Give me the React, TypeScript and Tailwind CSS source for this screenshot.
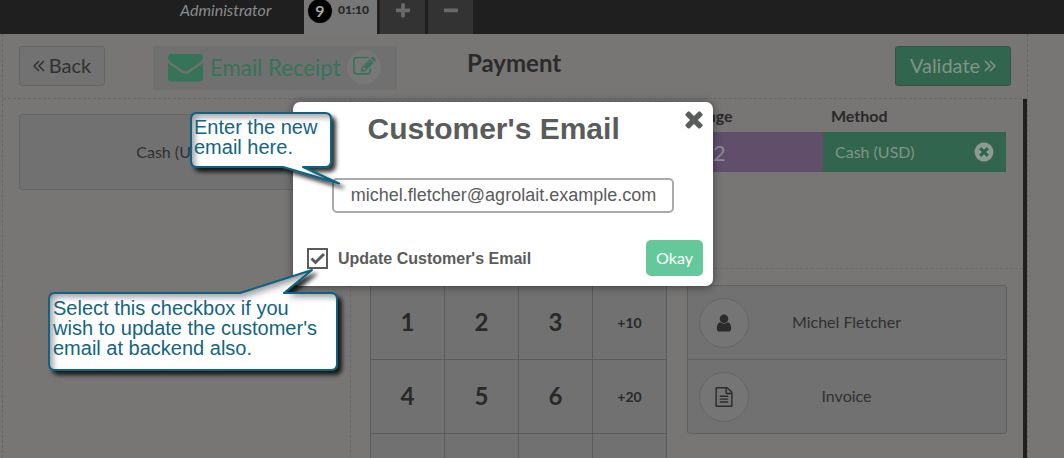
import React from "react";

const paths = {
  user: "M1536 1399q0 109-62.5 187t-150.5 78h-854q-88 0-150.5-78t-62.5-187q0-85 8.5-160.5t31.5-152 58.5-131 94-89 134.5-34.5q131 128 313 128t313-128q76 0 134.5 34.5t94 89 58.5 131 31.5 152 8.5 160.5zm-256-887q0 159-112.5 271.5t-271.5 112.5-271.5-112.5-112.5-271.5 112.5-271.5 271.5-112.5 271.5 112.5 112.5 271.5z",
  times: "M1490 1322q0 40-28 68l-136 136q-28 28-68 28t-68-28l-294-294-294 294q-28 28-68 28t-68-28l-136-136q-28-28-28-68t28-68l294-294-294-294q-28-28-28-68t28-68l136-136q28-28 68-28t68 28l294 294 294-294q28-28 68-28t68 28l136 136q28 28 28 68t-28 68l-294 294 294 294q28 28 28 68z",
  plus: "M1600 736v192q0 40-28 68t-68 28h-416v416q0 40-28 68t-68 28h-192q-40 0-68-28t-28-68v-416h-416q-40 0-68-28t-28-68v-192q0-40 28-68t68-28h416v-416q0-40 28-68t68-28h192q40 0 68 28t28 68v416h416q40 0 68 28t28 68z",
  minus: "M1600 736v192q0 40-28 68t-68 28h-1216q-40 0-68-28t-28-68v-192q0-40 28-68t68-28h1216q40 0 68 28t28 68z",
  envelope: "M1792 710v794q0 66-47 113t-113 47h-1472q-66 0-113-47t-47-113v-794q44 49 101 87 362 246 497 345 57 42 92.5 65.5t94.5 48 110 24.5h2q51 0 110-24.5t94.5-48 92.5-65.5q170-123 498-345 57-39 100-87zm0-294q0 79-49 151t-122 123q-376 261-468 325-10 7-42.5 31t-54 38.5-52 32.5-57.5 27-50 9h-2q-23 0-50-9t-57.5-27-52-32.5-54-38.5-42.5-31q-91-64-262-182.5t-205-142.5q-62-42-117-115.5t-55-136.5q0-78 41.5-130t118.5-52h1472q65 0 112.5 47t47.5 113z",
  edit: "M888 1184l116-116-152-152-116 116v56h96v96h56zm440-720q-16-16-33 1l-350 350q-17 17-1 33t33-1l350-350q17-17 1-33zm80 594v190q0 119-84.5 203.5t-203.5 84.5h-832q-119 0-203.5-84.5t-84.5-203.5v-832q0-119 84.5-203.5t203.5-84.5h832q63 0 117 25 15 7 18 23 3 17-9 29l-49 49q-14 14-32 8-23-6-45-6h-832q-66 0-113 47t-47 113v832q0 66 47 113t113 47h832q66 0 113-47t47-113v-126q0-13 9-22l64-64q15-15 35-7t20 29zm-96-738l288 288-672 672h-288v-288zm444 132l-92 92-288-288 92-92q28-28 68-28t68 28l152 152q28 28 28 68t-28 68z",
  timesCircle: "M1277 1122q0-26-19-45l-181-181 181-181q19-19 19-45 0-27-19-46l-90-90q-19-19-46-19-26 0-45 19l-181 181-181-181q-19-19-45-19-27 0-46 19l-90 90q-19 19-19 46 0 26 19 45l181 181-181 181q-19 19-19 45 0 27 19 46l90 90q19 19 46 19 26 0 45-19l181-181 181 181q19 19 45 19 27 0 46-19l90-90q19-19 19-46zm387-226q0 209-103 385.5t-279.5 279.5-385.5 103-385.5-103-279.5-279.5-103-385.5 103-385.5 279.5-279.5 385.5-103 385.5 103 279.5 279.5 103 385.5z",
  file: "M1596 380q28 28 48 76t20 88v1152q0 40-28 68t-68 28h-1344q-40 0-68-28t-28-68v-1600q0-40 28-68t68-28h896q40 0 88 20t76 48zm-444-244v376h376q-10-29-22-41l-313-313q-12-12-41-22zm384 1528v-1024h-416q-40 0-68-28t-28-68v-416h-768v1536h1280zm-1024-864q0-14 9-23t23-9h704q14 0 23 9t9 23v64q0 14-9 23t-23 9h-704q-14 0-23-9t-9-23v-64zm736 224q14 0 23 9t9 23v64q0 14-9 23t-23 9h-704q-14 0-23-9t-9-23v-64q0-14 9-23t23-9h704zm0 256q14 0 23 9t9 23v64q0 14-9 23t-23 9h-704q-14 0-23-9t-9-23v-64q0-14 9-23t23-9h704z",
};

function Icon({ name, className }: { name: keyof typeof paths; className: string }) {
  return (
    <svg viewBox="0 0 1792 1792" fill="currentColor" className={className}>
      <path d={paths[name]} />
    </svg>
  );
}

function Chevrons({ className }: { className: string }) {
  return (
    <svg viewBox="0 0 12 12" fill="none" stroke="currentColor" strokeWidth="1.5" className={className}>
      <path d="M1 1 6 6 1 11M6 1l5 5-5 5" />
    </svg>
  );
}

function TopBar() {
  return (
    <header className="flex h-[34px] shrink-0 bg-[#1f1f1f] pl-[180px]">
      <div className="w-[124px] text-[16px] leading-[20px] italic text-[#8b8b8b]">Administrator</div>
      <div className="flex w-[73px] items-start bg-[#777777] pl-1">
        <span className="-mt-px flex size-6 items-center justify-center rounded-full bg-black text-[16px] font-bold text-[#a8a8a8]">9</span>
        <span className="ml-1.5 text-[12px] font-black leading-[20px] text-[#272727]">01:10</span>
      </div>
      <div className="ml-[3px] flex w-[45px] justify-center bg-[#333333] pt-0.5 text-[#696969]">
        <Icon name="plus" className="size-[18px]" />
      </div>
      <div className="ml-[3px] flex w-[45px] justify-center bg-[#333333] pt-0.5 text-[#696969]">
        <Icon name="minus" className="size-[18px]" />
      </div>
    </header>
  );
}

function ActionBar() {
  return (
    <div className="flex h-[64px] shrink-0 items-start pt-3">
      <button className="ml-4 flex h-10 w-[86px] items-center justify-center gap-1 rounded-[3px] border border-[#656565] bg-[#737272] pb-0.5 text-[20px] text-[#303030]">
        <Chevrons className="mt-0.5 size-[12px] rotate-180" />
        Back
      </button>
      <div className="ml-12 flex h-[44px] w-[244px] items-center bg-[#707070] pl-[15px] text-[#367459]">
        <Icon name="envelope" className="-mt-[3px] size-[35px]" />
        <span className="ml-[7px] w-[130px] whitespace-nowrap text-[22.2px]">Email Receipt</span>
        <span className="-mt-[3px] ml-[7px] flex size-[34px] items-center justify-center rounded-full bg-[#787777]">
          <Icon name="edit" className="size-[23px]" />
        </span>
      </div>
      <h1 className="ml-[70px] text-[24px] font-bold leading-[34px] text-[#2b2b2b]">Payment</h1>
      <button className="ml-auto mr-4 flex h-10 w-[116px] items-center justify-center gap-1 rounded-[3px] border border-[#345346] bg-[#32654d] pb-0.5 text-[20px] text-[#819488]">
        Validate
        <Chevrons className="mt-0.5 size-[12px]" />
      </button>
    </div>
  );
}

const keys = ["1", "2", "3", "+10", "4", "5", "6", "+20", "", "", "", ""];

function PaymentLines() {
  return (
    <div className="h-[170px] shrink-0 border-b border-dashed border-[#6d6b6b] pl-[320px]">
      <div className="flex h-[33px] items-center text-[16px] font-bold text-[#292929]">
        <div className="w-[152px] pl-2">Change</div>
        <div className="pl-2">Method</div>
      </div>
      <div className="flex h-10 items-center">
        <div className="flex h-10 w-[152px] items-center bg-[#604e6b] pl-[42px] text-[22px] text-[#918899]">2</div>
        <div className="flex h-10 w-[183px] items-center justify-between bg-[#32654d] pl-3 pr-[11px] text-[16px] text-[#819488]">
          Cash (USD)
          <Icon name="timesCircle" className="size-[22px] text-[#8d9b94]" />
        </div>
      </div>
    </div>
  );
}

function CustomerRow({ icon, label, last }: { icon: "user" | "file"; label: string; last?: boolean }) {
  return (
    <div className={`grid grid-cols-[1fr_auto_1fr] items-center pl-[11px] ${last ? "h-[73px]" : "h-[74px] border-b border-[#5f6060]"}`}>
      <span className="flex size-[50px] items-center justify-center rounded-full border border-[#666666] bg-[#757575] text-[#2b2b2b]">
        <Icon name={icon} className="size-5" />
      </span>
      <span className="-ml-[12px] -mt-0.5 text-[16px] text-[#303030]">{label}</span>
    </div>
  );
}

function PaymentScreen() {
  return (
    <div className="ml-[2px] flex w-[1026px] grow flex-col border-x border-dashed border-[#686666]">
      <ActionBar />
      <div className="flex h-[360px] border-t border-dashed border-[#696767]">
        <aside className="w-[347px] pl-4 pt-[15px]">
          <button className="h-[76px] w-[314px] rounded-[3px] border border-[#646565] bg-[#717171] text-[16px] text-[#303030]">Cash (USD)</button>
        </aside>
        <main className="flex grow flex-col border-l border-dashed border-[#696767]">
          <PaymentLines />
          <div className="flex items-start gap-5 pl-[19px] pt-4">
            <div className="grid w-[297px] grid-cols-[74px_74px_74px_74px] border-l border-t border-[#5b5b5b] bg-[#717171]">
              {keys.map((key, index) => (
                <div
                  key={index}
                  className={`flex h-[74px] items-center justify-center border-b border-r border-[#5b5b5b] font-bold text-[#292929] ${index % 4 === 3 ? "text-[14px]" : "pb-0.5 text-[24px]"}`}
                >
                  {key}
                </div>
              ))}
            </div>
            <div className="w-[320px] rounded-[3px] border border-[#5f6060] bg-[#717171]">
              <CustomerRow icon="user" label="Michel Fletcher" />
              <CustomerRow icon="file" label="Invoice" last />
            </div>
          </div>
        </main>
        <div className="w-1 bg-[#1f1f1f]" />
      </div>
    </div>
  );
}

function EmailDialog() {
  return (
    <div className="absolute left-[293px] top-[102px] h-[184px] w-[420px] rounded-[7px] bg-white font-['Liberation_Sans',sans-serif] text-[#5a5c5b] shadow-[0_1px_10px_rgba(0,0,0,0.45)]">
      <div className="flex h-[76px] items-start justify-between pl-[74.5px] pr-[6px]">
        <h2 className="pt-[9px] text-[30px] font-bold leading-[36px]">Customer's Email</h2>
        <Icon name="times" className="mt-[4px] size-[26px]" />
      </div>
      <div className="mx-[39px] flex h-[35px] items-center justify-center rounded-[5px] border-2 border-[#aaaaaa] pl-px text-[18px]">
        michel.fletcher@agrolait.example.com
      </div>
      <div className="mt-[27px] flex items-center pl-[14px] pr-[10px]">
        <span className="flex size-[21px] items-center justify-center border-2 border-[#5a5c5b]">
          <svg viewBox="0 0 16 16" fill="none" stroke="currentColor" strokeWidth="3" className="size-4">
            <path d="m1.5 8.5 4 4L14 4" />
          </svg>
        </span>
        <span className="ml-[10px] pt-0.5 text-[16px] font-bold">Update Customer's Email</span>
        <button className="ml-auto h-9 w-[57px] rounded-[5px] bg-[#64c89a] font-['Lato',sans-serif] text-[16px] text-white">Okay</button>
      </div>
    </div>
  );
}

function Bubble({ id, d }: { id: string; d: string }) {
  return (
    <svg width="350" height="150" className="absolute left-0 top-0 overflow-visible">
      <defs>
        <filter id={`${id}-drop`} x="-20%" y="-20%" width="150%" height="150%">
          <feDropShadow dx="4" dy="4" stdDeviation="2" floodColor="#000" floodOpacity="0.8" />
        </filter>
        <filter id={`${id}-inner`} x="-10%" y="-10%" width="120%" height="120%" colorInterpolationFilters="sRGB">
          <feComponentTransfer in="SourceAlpha">
            <feFuncA type="table" tableValues="1 0" />
          </feComponentTransfer>
          <feOffset dx="4" dy="4" />
          <feGaussianBlur stdDeviation="3" result="edge" />
          <feFlood floodColor="#4b4b58" floodOpacity="0.55" />
          <feComposite in2="edge" operator="in" />
          <feComposite in2="SourceAlpha" operator="in" result="shade" />
          <feMerge>
            <feMergeNode in="SourceGraphic" />
            <feMergeNode in="shade" />
          </feMerge>
        </filter>
      </defs>
      <g filter={`url(#${id}-drop)`}>
        <path d={d} fill="#fff" filter={`url(#${id}-inner)`} />
        <path d={d} fill="none" stroke="#096381" strokeWidth="2" strokeLinejoin="round" />
      </g>
    </svg>
  );
}

export default function App() {
  return (
    <div className="relative flex h-[458px] w-[1064px] flex-col overflow-hidden bg-[#787575] font-['Lato',sans-serif]">
      <TopBar />
      <PaymentScreen />
      <EmailDialog />
      <div className="absolute left-[190px] top-[112px] h-[56px] w-[142px]">
        <Bubble id="email" d="M7 1H135Q141 1 141 7V49Q141 55 135 55H113L149 71.5 93 55H7Q1 55 1 49V7Q1 1 7 1Z" />
        <p className="relative whitespace-nowrap pl-1 pt-[5px] font-['Liberation_Sans',sans-serif] text-[20px] leading-[20px] text-[#126581]">
          Enter the new
          <br />
          email here.
        </p>
      </div>
      <div className="absolute left-[48px] top-[292px] h-[80px] w-[290px]">
        <Bubble id="update" d="M7 1H192L264-22 236 1H283Q289 1 289 7V72Q289 78 283 78H7Q1 78 1 72V7Q1 1 7 1Z" />
        <p className="relative whitespace-nowrap pl-[5px] pt-[6px] font-['Liberation_Sans',sans-serif] text-[20px] leading-[20px] text-[#126581]">
          Select this checkbox if you
          <br />
          wish to update the customer's
          <br />
          email at backend also.
        </p>
      </div>
    </div>
  );
}
